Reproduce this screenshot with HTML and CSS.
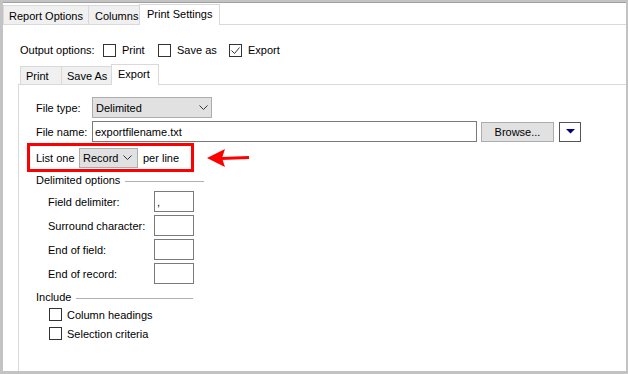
FILE: index.html
```html
<!DOCTYPE html>
<html>
<head>
    <title>Print Settings</title>
    <link rel="stylesheet" href="styles.css">
</head>
<body>
<div id="window">
    <div class="tab_strip" id="top_tabs">
        <div class="tab" id="tab_report">Report Options</div>
        <div class="tab" id="tab_columns">Columns</div>
        <div class="tab active" id="tab_print_settings">Print Settings</div>
    </div>
    <div id="settings_panel">
        <div id="output_row">
            <span id="output_label">Output options:</span>
            <span class="check_item" id="opt_print"><span class="checkbox"></span>Print</span>
            <span class="check_item" id="opt_save"><span class="checkbox"></span>Save as</span>
            <span class="check_item" id="opt_export">
                <span class="checkbox"><svg width="11" height="11" viewBox="0 0 11 11"><polyline points="1.5,5.5 4.5,8.5 9.5,2.5" fill="none" stroke="#333" stroke-width="1"/></svg></span>Export
            </span>
        </div>
        <div class="tab_strip" id="inner_tabs">
            <div class="tab" id="tab_print">Print</div>
            <div class="tab" id="tab_saveas">Save As</div>
            <div class="tab active" id="tab_export">Export</div>
        </div>
        <div id="export_panel">
            <div class="row" id="type_row">
                <span class="label">File type:</span>
                <div class="dropdown" id="file_type">
                    <span>Delimited</span>
                    <svg width="9" height="5" viewBox="0 0 9 5"><polyline points="0.5,0.5 4.5,4.5 8.5,0.5" fill="none" stroke="#333"/></svg>
                </div>
            </div>
            <div class="row" id="name_row">
                <span class="label">File name:</span>
                <input type="text" id="file_name" value="exportfilename.txt" spellcheck="false">
                <button id="browse">Browse...</button>
                <button id="more"><svg width="9" height="5" viewBox="0 0 9 5"><polygon points="0,0 9,0 4.5,4.5" fill="#000080"/></svg></button>
            </div>
            <div class="row" id="list_row">
                <div id="highlight">
                    <span id="list_label">List one</span>
                    <div class="dropdown" id="record">
                        <span>Record</span>
                        <svg width="9" height="5" viewBox="0 0 9 5"><polyline points="0.5,0.5 4.5,4.5 8.5,0.5" fill="none" stroke="#333"/></svg>
                    </div>
                    <span>per line</span>
                </div>
                <svg id="arrow" width="43" height="22" viewBox="0 0 43 22">
                    <polygon points="0,11 18,2 15,11 18,20" fill="#f00"/>
                    <line x1="14" y1="11.5" x2="42" y2="10.5" stroke="#f00" stroke-width="3"/>
                </svg>
            </div>
            <div class="group_title" id="delim_title"><span>Delimited options</span><span class="rule"></span></div>
            <div id="delim_fields">
                <div class="field"><span>Field delimiter:</span><input type="text" class="small_box" value="," spellcheck="false"></div>
                <div class="field"><span>Surround character:</span><input type="text" class="small_box"></div>
                <div class="field"><span>End of field:</span><input type="text" class="small_box"></div>
                <div class="field"><span>End of record:</span><input type="text" class="small_box"></div>
            </div>
            <div class="group_title" id="include_title"><span>Include</span><span class="rule"></span></div>
            <div id="include_checks">
                <div class="check_row"><span class="checkbox"></span>Column headings</div>
                <div class="check_row"><span class="checkbox"></span>Selection criteria</div>
            </div>
        </div>
    </div>
</div>
</body>
</html>
```

FILE: styles.css
```css
* {
    box-sizing: border-box;
}
html, body {
    margin: 0;
    height: 374px;
    overflow: hidden;
}
body {
    background: #c3c3c3;
    font-family: "Liberation Sans", Arial, sans-serif;
    font-size: 11px;
    color: #000;
}
#window {
    margin: 2px 2px 0 3px;
    height: 369px;
    background: #fff;
    border-top: 1px solid #a0a0a0;
    display: flex;
    flex-direction: column;
}
.tab_strip {
    display: flex;
    align-items: flex-end;
    border-bottom: 1px solid #d9d9d9;
    flex: none;
}
#top_tabs {
    height: 22px;
}
.tab {
    height: 19px;
    border: 1px solid #d9d9d9;
    border-bottom: none;
    background: #f0f0f0;
    margin-right: -1px;
    padding-left: 5px;
    padding-top: 1px;
    display: flex;
    align-items: center;
    white-space: nowrap;
}
.tab.active {
    height: 21px;
    margin-bottom: -1px;
    background: #fff;
    position: relative;
    z-index: 1;
    padding-top: 0;
    padding-bottom: 2px;
}
#tab_report {
    width: 86px;
}
#tab_columns {
    width: 52px;
    padding-left: 6px;
}
#tab_print_settings {
    width: 81px;
    padding-left: 7px;
}
#settings_panel {
    flex: 1;
    padding: 17px 0 0 15px;
    display: flex;
    flex-direction: column;
}
#output_row {
    display: flex;
    align-items: center;
    height: 16px;
    padding-left: 2px;
}
#output_label {
    width: 83px;
}
.check_item {
    display: flex;
    align-items: center;
}
#opt_print {
    width: 55px;
}
#opt_save {
    width: 71px;
}
.checkbox {
    width: 13px;
    height: 13px;
    border: 1px solid #333;
    background: #fff;
    margin-right: 6px;
    flex: none;
    display: flex;
}
#inner_tabs {
    margin-top: 6px;
    height: 21px;
    padding-left: 2px;
}
#inner_tabs .tab {
    height: 18px;
}
#inner_tabs .tab.active {
    height: 21px;
    padding-bottom: 3px;
}
#tab_print {
    width: 42px;
}
#tab_saveas {
    width: 51px;
}
#tab_export {
    width: 48px;
    padding-left: 6px;
}
#export_panel {
    flex: 1;
    border-left: 1px solid #d9d9d9;
    padding: 12px 0 0 17px;
}
.row {
    display: flex;
    align-items: center;
}
.label {
    width: 56px;
}
.dropdown {
    height: 21px;
    border: 1px solid #adadad;
    background: #e1e1e1;
    display: flex;
    align-items: center;
    justify-content: space-between;
    padding: 0 3px 0 3px;
}
#file_type {
    width: 120px;
}
#name_row {
    margin-top: 3px;
}
#file_name {
    width: 385px;
    height: 21px;
    border: 1px solid #7a7a7a;
    padding: 0 2px;
    margin: 0;
    font: inherit;
    color: #000;
}
#browse {
    width: 73px;
    height: 20px;
    margin: 0 0 0 4px;
    border: 1px solid #adadad;
    background: #e1e1e1;
    font: inherit;
    color: #000;
    padding: 0;
}
#more {
    width: 22px;
    height: 20px;
    margin: 0 0 0 5px;
    border: 1px solid #555;
    background: #fff;
    padding: 0;
    display: flex;
    align-items: center;
    justify-content: center;
}
#list_row {
    margin-top: 1px;
}
#highlight {
    display: flex;
    align-items: center;
    width: 167px;
    height: 29px;
    border: 3px solid #f00;
    margin-left: -9px;
    padding-left: 6px;
}
#list_label {
    width: 43px;
}
#record {
    width: 59px;
    height: 20px;
    margin-right: 5px;
    padding-right: 5px;
}
#arrow {
    margin-left: 13px;
}
.group_title {
    display: flex;
    align-items: center;
    height: 13px;
}
.rule {
    flex: 1;
    margin: 3px 0 0 5px;
    border-top: 1px solid #b0b0b0;
}
#delim_title {
    margin-top: 1px;
    width: 168px;
}
#delim_fields {
    padding-left: 12px;
    margin-top: 5px;
}
.field {
    display: flex;
    align-items: center;
    margin-bottom: 3px;
}
.field span {
    width: 106px;
}
.small_box {
    width: 40px;
    height: 21px;
    border: 1px solid #7a7a7a;
    padding: 0 2px;
    margin: 0;
    font: inherit;
    color: #000;
}
#include_title {
    margin-top: 6px;
    width: 157px;
}
#include_checks {
    margin-top: 2px;
}
.check_row {
    display: flex;
    align-items: center;
    height: 19px;
    padding-left: 13px;
}
.check_row .checkbox {
    margin-right: 5px;
}
```
